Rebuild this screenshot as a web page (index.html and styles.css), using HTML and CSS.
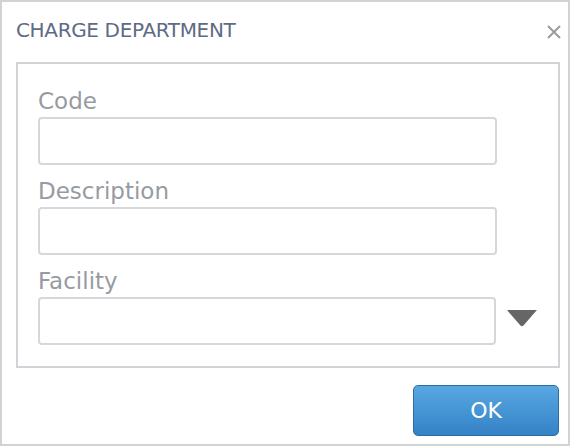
FILE: index.html
```html
<!DOCTYPE html>
<html lang="en">
<head>
    <meta charset="UTF-8">
    <meta name="viewport" content="width=device-width, initial-scale=1.0">
    <title>Charge Department</title>
    <link rel="stylesheet" href="styles.css">
</head>
<body>
    <div class="dialog">
        <div class="dialog-header">
            <div class="dialog-title">CHARGE DEPARTMENT</div>
            <svg class="close" width="16" height="16" viewBox="0 0 16 16">
                <path d="M2 2 L14 14 M14 2 L2 14" stroke="#9b9b9b" stroke-width="2" fill="none"/>
            </svg>
        </div>
        <div class="panel">
            <div class="field">
                <label for="code">Code</label>
                <div class="field-row">
                    <input type="text" id="code">
                </div>
            </div>
            <div class="field">
                <label for="description">Description</label>
                <div class="field-row">
                    <input type="text" id="description">
                </div>
            </div>
            <div class="field last">
                <label for="facility">Facility</label>
                <div class="field-row">
                    <input type="text" id="facility">
                    <svg class="dropdown" width="32" height="18" viewBox="0 0 32 18">
                        <path d="M1 1 L31 1 L17.5 16.5 Q16 18 14.5 16.5 Z" fill="#666"/>
                    </svg>
                </div>
            </div>
        </div>
        <div class="dialog-footer">
            <button class="btn-ok">OK</button>
        </div>
    </div>
</body>
</html>
```

FILE: styles.css
```css
body {
    margin: 0;
    font-family: 'DejaVu Sans', sans-serif;
    background: #fff;
}

.dialog {
    width: 570px;
    height: 446px;
    box-sizing: border-box;
    border: 2px solid #d2d2d2;
    background: #fff;
}

.dialog-header {
    display: flex;
    justify-content: space-between;
    align-items: center;
    padding: 16px 6px 0 14px;
    height: 24px;
}

.dialog-title {
    color: #5e6a86;
    font-size: 20px;
    line-height: 24px;
    letter-spacing: -0.35px;
}

.close {
    margin-top: 4px;
}

.panel {
    margin: 20px 8px 0 14px;
    border: 2px solid #d0d3d7;
    padding: 24px 20px 21px 20px;
}

.field {
    margin-bottom: 13px;
}

.field.last {
    margin-bottom: 0;
}

.field label {
    display: block;
    color: #979ba1;
    font-size: 23px;
    line-height: 27px;
    margin-bottom: 2px;
}

.field-row {
    display: flex;
    align-items: center;
}

.field-row input {
    width: 459px;
    height: 48px;
    box-sizing: border-box;
    border: 2px solid #d5d7db;
    border-radius: 4px;
    padding: 0 10px;
    font-family: inherit;
    font-size: 18px;
    outline: none;
}

.dropdown {
    margin-left: 10px;
    margin-top: -6px;
}

.dialog-footer {
    display: flex;
    justify-content: flex-end;
    padding: 17px 9px 0 0;
}

.btn-ok {
    width: 146px;
    height: 51px;
    border: 1px solid #2d6ca3;
    border-radius: 5px;
    background: linear-gradient(to bottom, #58a8e2, #3482c6);
    color: #fff;
    font-family: inherit;
    font-size: 22px;
    cursor: pointer;
}
```
